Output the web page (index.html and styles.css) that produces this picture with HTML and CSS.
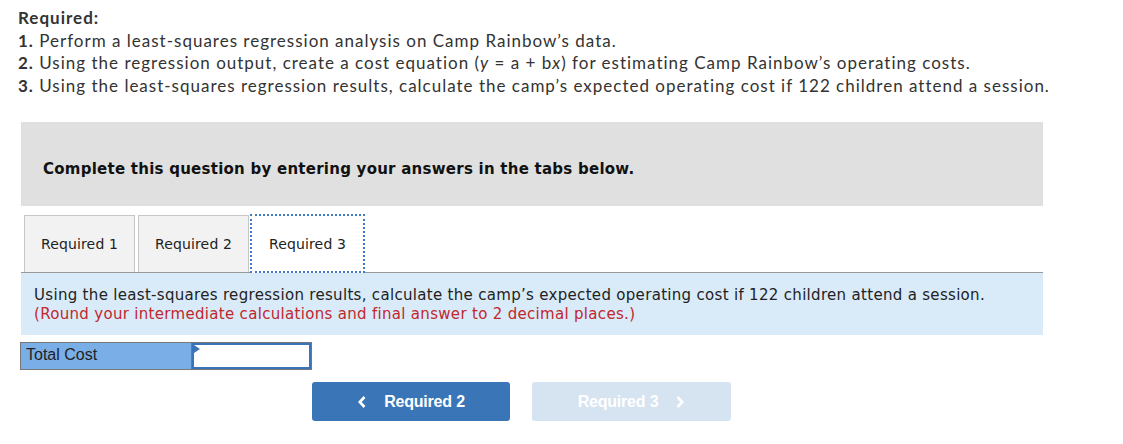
FILE: index.html
```html
<!DOCTYPE html>
<html>
<head>
<meta charset="utf-8">
<link rel="stylesheet" href="styles.css">
</head>
<body>
<div class="required">
  <div class="req-title">Required:</div>
  <div><b>1.</b> Perform a least-squares regression analysis on Camp Rainbow’s data.</div>
  <div><b>2.</b> Using the regression output, create a cost equation (<i>y</i> = a + b<i>x</i>) for estimating Camp Rainbow’s operating costs.</div>
  <div><b>3.</b> Using the least-squares regression results, calculate the camp’s expected operating cost if 122 children attend a session.</div>
</div>
<div class="container">
  <div class="banner">Complete this question by entering your answers in the tabs below.</div>
  <div class="tabs">
    <div class="tab tab1">Required 1</div>
    <div class="tab tab2">Required 2</div>
    <div class="tab tab3 active">Required 3</div>
  </div>
  <div class="panel">
    <div>Using the least-squares regression results, calculate the camp’s expected operating cost if 122 children attend a session.</div>
    <div class="note">(Round your intermediate calculations and final answer to 2 decimal places.)</div>
  </div>
  <div class="answer-row">
    <div class="label-cell">Total Cost</div>
    <div class="input-cell"><span class="flag"></span></div>
  </div>
  <div class="nav">
    <div class="btn btn-prev">
      <svg class="chev" width="10" height="14" viewBox="0 0 10 14"><path d="M7.5 2 L2.8 7 L7.5 12" fill="none" stroke="#fff" stroke-width="2.6"/></svg>
      <span>Required 2</span>
    </div>
    <div class="btn btn-next">
      <span>Required 3</span>
      <svg class="chev" width="10" height="14" viewBox="0 0 10 14"><path d="M2.5 2 L7.2 7 L2.5 12" fill="none" stroke="#fff" stroke-width="2.6"/></svg>
    </div>
  </div>
</div>
</body>
</html>
```
FILE: styles.css
```css
body {
  margin: 0;
  background: #fff;
}
.required {
  padding: 7px 0 0 18px;
  font-family: Lato, "Open Sans", sans-serif;
  font-size: 17px;
  letter-spacing: 1px;
  line-height: 22.5px;
  color: #333;
}
.required b, .req-title {
  font-weight: bold;
}
.container {
  margin: 25px 0 0 21px;
  width: 1022px;
}
.banner {
  box-sizing: border-box;
  height: 84px;
  background: #e0e0e0;
  padding: 38px 0 0 22px;
  font-family: "DejaVu Sans", sans-serif;
  font-weight: bold;
  font-size: 15px;
  letter-spacing: 0.25px;
  color: #111;
}
.tabs {
  display: flex;
  margin-top: 8px;
  padding-left: 3px;
  align-items: flex-end;
}
.tab {
  box-sizing: border-box;
  height: 57px;
  border: 1px solid #c6c6c6;
  border-bottom: none;
  background: #f2f2f2;
  font-family: "DejaVu Sans", sans-serif;
  font-size: 14px;
  letter-spacing: 0.15px;
  color: #222;
  display: flex;
  align-items: center;
  justify-content: center;
}
.tab1 { width: 111px; margin-right: 3px; }
.tab2 { width: 111px; margin-right: 1px; }
.tab3 {
  width: 115px;
  background: #fff;
  border: 2px dotted #3f7bc4;
  height: 59px;
  margin-bottom: -1px;
  position: relative;
  z-index: 1;
}
.panel {
  border-top: 1px solid #9a9a9a;
  background: #d9ebf9;
  padding: 13px 13px 11px;
  font-family: "DejaVu Sans", sans-serif;
  font-size: 15px;
  letter-spacing: 0.31px;
  line-height: 19px;
  color: #222;
}
.note {
  color: #c1272d;
}
.answer-row {
  display: flex;
  margin: 7px 0 0 -1px;
  height: 28px;
}
.label-cell {
  box-sizing: border-box;
  width: 171px;
  height: 28px;
  background: #7aaee6;
  border: 1px solid #777;
  border-right: none;
  font-family: "Liberation Sans", Arial, sans-serif;
  font-size: 16px;
  color: #222;
  padding: 3px 0 0 5px;
}
.input-cell {
  box-sizing: border-box;
  width: 121px;
  height: 28px;
  background: #fff;
  border: 1px solid #777;
  box-shadow: inset 0 0 0 2px #3b73b9;
  position: relative;
}
.flag {
  position: absolute;
  left: 2px;
  top: 2px;
  width: 0;
  height: 0;
  border-top: 4px solid transparent;
  border-bottom: 4px solid transparent;
  border-left: 6px solid #3b73b9;
}
.nav {
  display: flex;
  margin: 12px 0 0 291px;
  gap: 22px;
}
.btn {
  box-sizing: border-box;
  width: 198px;
  height: 39px;
  border-radius: 3px;
  display: flex;
  align-items: center;
  justify-content: center;
  gap: 17px;
  font-family: "Liberation Sans", Arial, sans-serif;
  font-weight: bold;
  font-size: 16px;
  letter-spacing: -0.2px;
  color: #fff;
}
.btn-prev {
  background: #3a75b8;
}
.btn-next {
  width: 199px;
  background: #d6e3f1;
}
.chev {
  display: block;
}
```
